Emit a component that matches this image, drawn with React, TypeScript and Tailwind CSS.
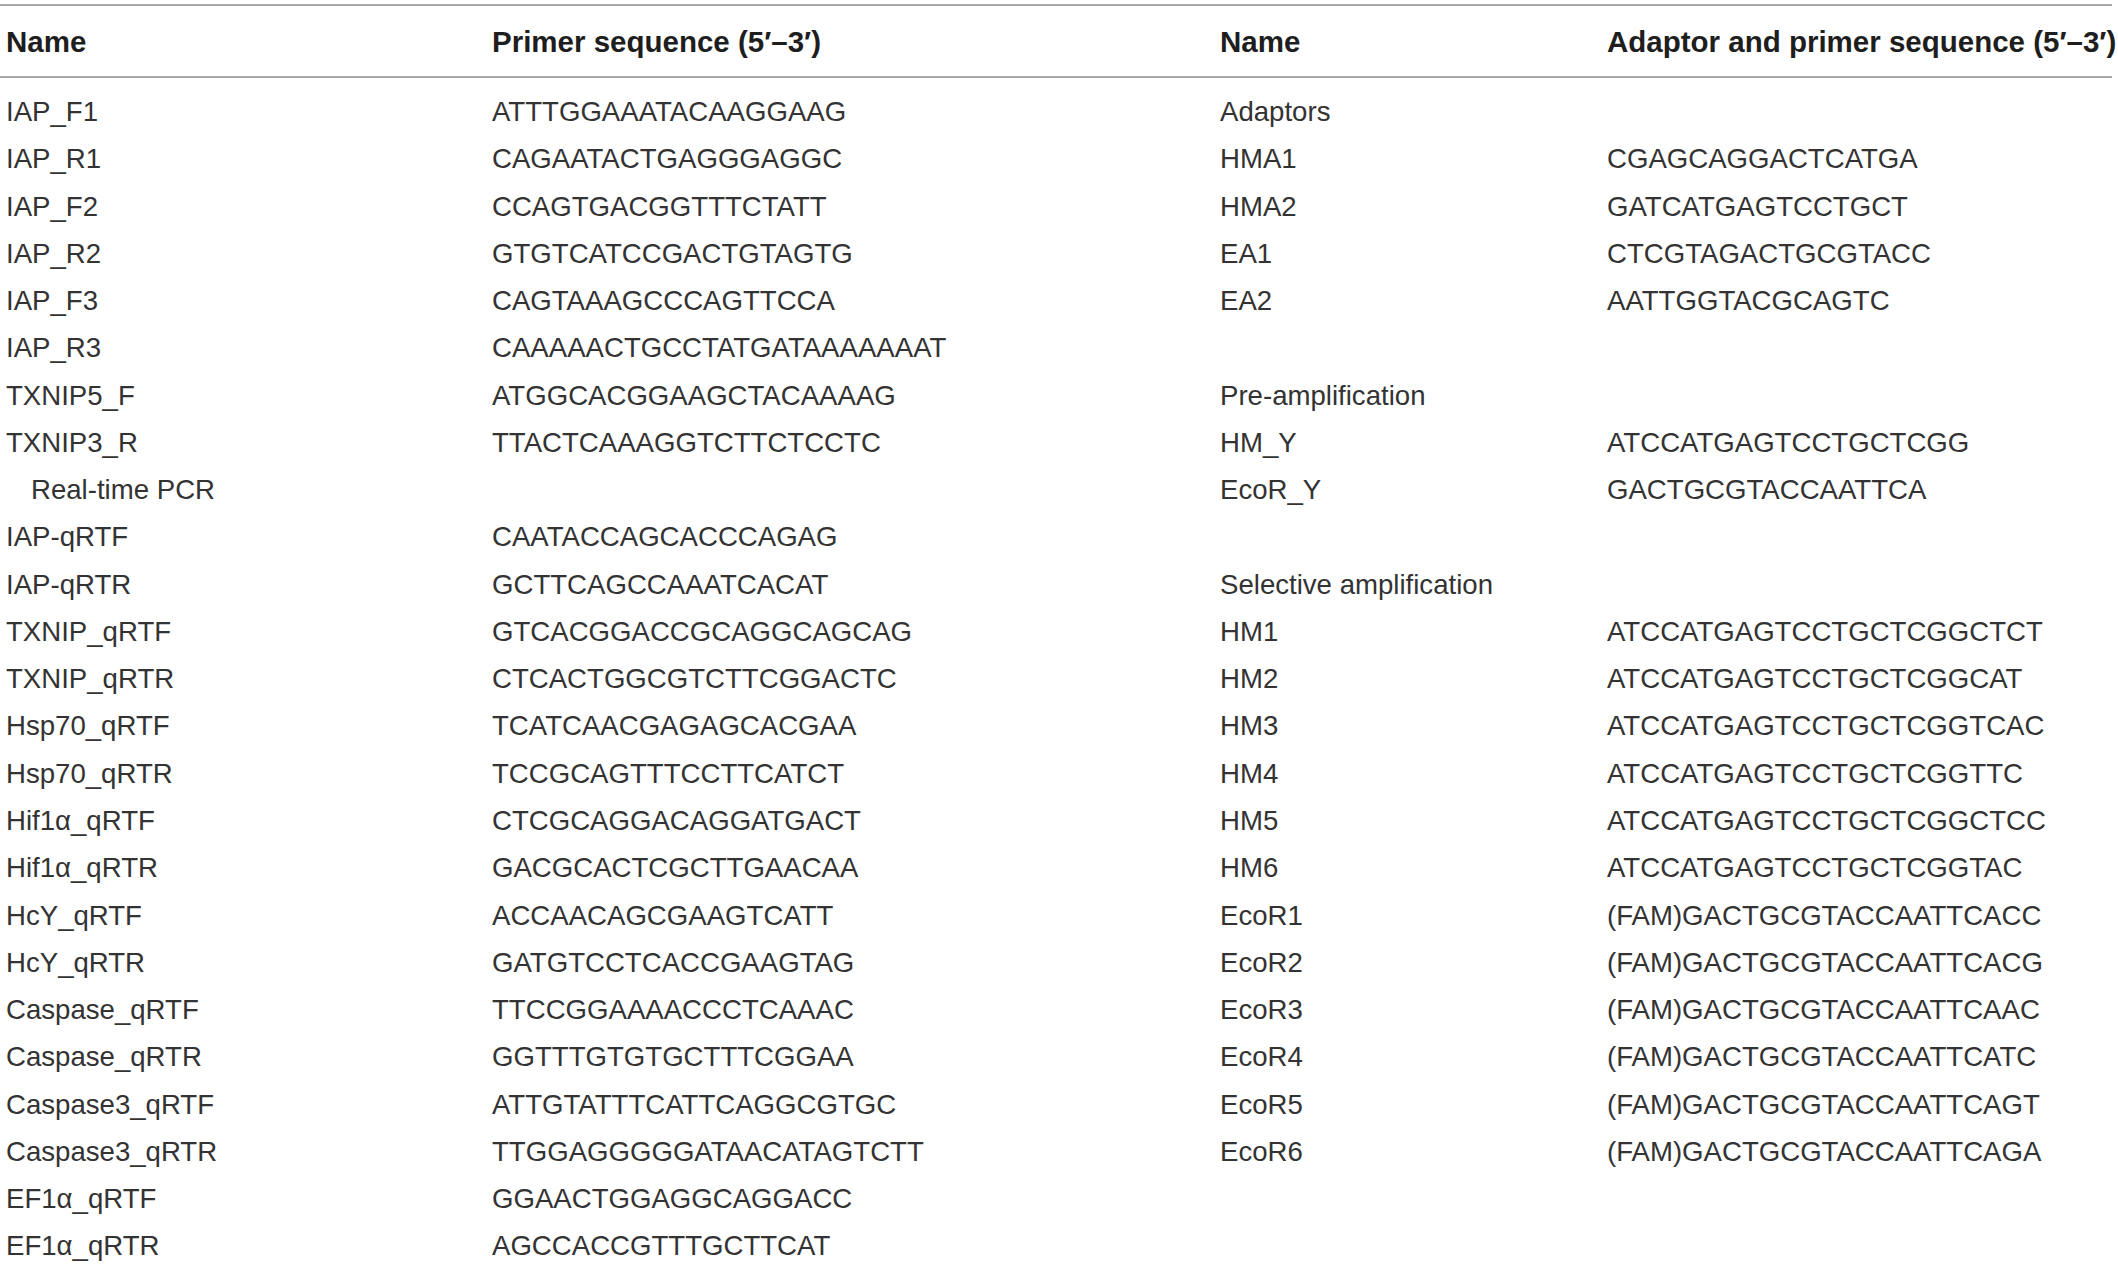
const rows: [string, string, string, string][] = [
  ["IAP_F1", "ATTTGGAAATACAAGGAAG", "Adaptors", ""],
  ["IAP_R1", "CAGAATACTGAGGGAGGC", "HMA1", "CGAGCAGGACTCATGA"],
  ["IAP_F2", "CCAGTGACGGTTTCTATT", "HMA2", "GATCATGAGTCCTGCT"],
  ["IAP_R2", "GTGTCATCCGACTGTAGTG", "EA1", "CTCGTAGACTGCGTACC"],
  ["IAP_F3", "CAGTAAAGCCCAGTTCCA", "EA2", "AATTGGTACGCAGTC"],
  ["IAP_R3", "CAAAAACTGCCTATGATAAAAAAAT", "", ""],
  ["TXNIP5_F", "ATGGCACGGAAGCTACAAAAG", "Pre-amplification", ""],
  ["TXNIP3_R", "TTACTCAAAGGTCTTCTCCTC", "HM_Y", "ATCCATGAGTCCTGCTCGG"],
  ["Real-time PCR", "", "EcoR_Y", "GACTGCGTACCAATTCA"],
  ["IAP-qRTF", "CAATACCAGCACCCAGAG", "", ""],
  ["IAP-qRTR", "GCTTCAGCCAAATCACAT", "Selective amplification", ""],
  ["TXNIP_qRTF", "GTCACGGACCGCAGGCAGCAG", "HM1", "ATCCATGAGTCCTGCTCGGCTCT"],
  ["TXNIP_qRTR", "CTCACTGGCGTCTTCGGACTC", "HM2", "ATCCATGAGTCCTGCTCGGCAT"],
  ["Hsp70_qRTF", "TCATCAACGAGAGCACGAA", "HM3", "ATCCATGAGTCCTGCTCGGTCAC"],
  ["Hsp70_qRTR", "TCCGCAGTTTCCTTCATCT", "HM4", "ATCCATGAGTCCTGCTCGGTTC"],
  ["Hif1α_qRTF", "CTCGCAGGACAGGATGACT", "HM5", "ATCCATGAGTCCTGCTCGGCTCC"],
  ["Hif1α_qRTR", "GACGCACTCGCTTGAACAA", "HM6", "ATCCATGAGTCCTGCTCGGTAC"],
  ["HcY_qRTF", "ACCAACAGCGAAGTCATT", "EcoR1", "(FAM)GACTGCGTACCAATTCACC"],
  ["HcY_qRTR", "GATGTCCTCACCGAAGTAG", "EcoR2", "(FAM)GACTGCGTACCAATTCACG"],
  ["Caspase_qRTF", "TTCCGGAAAACCCTCAAAC", "EcoR3", "(FAM)GACTGCGTACCAATTCAAC"],
  ["Caspase_qRTR", "GGTTTGTGTGCTTTCGGAA", "EcoR4", "(FAM)GACTGCGTACCAATTCATC"],
  ["Caspase3_qRTF", "ATTGTATTTCATTCAGGCGTGC", "EcoR5", "(FAM)GACTGCGTACCAATTCAGT"],
  ["Caspase3_qRTR", "TTGGAGGGGGATAACATAGTCTT", "EcoR6", "(FAM)GACTGCGTACCAATTCAGA"],
  ["EF1α_qRTF", "GGAACTGGAGGCAGGACC", "", ""],
  ["EF1α_qRTR", "AGCCACCGTTTGCTTCAT", "", ""],
];

export default function App() {
  return (
    <div
      className="w-[2112px] bg-white text-[#333333] pt-[4px]"
      style={{ fontFamily: '"Liberation Sans", Arial, sans-serif' }}
    >
      <div className="h-[2px] bg-[#a8a8a8]"></div>

      <div className="grid grid-cols-[486px_728px_387px_1fr] pl-[6px] pt-[16px] pb-[14px] text-[29.5px] font-bold leading-[40px] text-[#1e1e1e] whitespace-nowrap">
        <p>Name</p>
        <p>Primer sequence (5′–3′)</p>
        <p>Name</p>
        <p>Adaptor and primer sequence (5′–3′)</p>
      </div>

      <div className="h-[2px] bg-[#a8a8a8]"></div>

      <div className="pt-[10px] text-[27.6px] leading-[47.28px]">
        {rows.map(([a, b, c, d], i) => (
          <div
            key={i}
            className="grid grid-cols-[486px_728px_387px_1fr] pl-[6px] h-[47.28px] whitespace-nowrap"
          >
            <p className={a === "Real-time PCR" ? "pl-[25px]" : ""}>{a}</p>
            <p>{b}</p>
            <p>{c}</p>
            <p>{d}</p>
          </div>
        ))}
      </div>
    </div>
  );
}
